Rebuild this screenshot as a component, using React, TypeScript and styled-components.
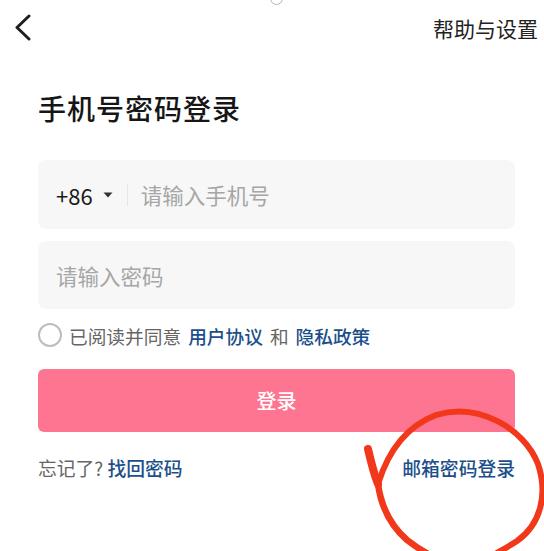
import React, { useState } from "react";
import styled, { createGlobalStyle } from "styled-components";

const GlobalStyle = createGlobalStyle`
  * { box-sizing: border-box; }
  body {
    margin: 0;
    background: #ffffff;
    font-family: "Noto Sans CJK SC", "Noto Sans", sans-serif;
  }
`;

const FONT = `"Noto Sans CJK SC", "Noto Sans", sans-serif`;

export default function App() {
  const [agreed, setAgreed] = useState(false);

  return (
    <StyledPage>
      <GlobalStyle />
      <StyledNotch />
      <StyledHeader>
        <StyledBack aria-label="back">
          <svg width="20" height="28" viewBox="0 0 20 28">
            <path d="M15 2 L3 13.5 L15 25" fill="none" stroke="#1f1f1f" strokeWidth="3" strokeLinecap="round" strokeLinejoin="round" />
          </svg>
        </StyledBack>
        <StyledHelp>帮助与设置</StyledHelp>
      </StyledHeader>

      <StyledTitle>手机号密码登录</StyledTitle>

      <StyledForm>
        <StyledInputBox $height={69}>
          <StyledCode>
            +86
            <svg width="10" height="6" viewBox="0 0 10 6">
              <path d="M0.5 0.5 L9.5 0.5 L5 5.5 Z" fill="#333" />
            </svg>
          </StyledCode>
          <StyledDivider />
          <StyledInput placeholder="请输入手机号" />
        </StyledInputBox>

        <StyledInputBox $height={68}>
          <StyledInput type="password" placeholder="请输入密码" />
        </StyledInputBox>

        <StyledAgreeRow>
          <StyledCheck $checked={agreed} onClick={() => setAgreed(!agreed)} />
          <span>已阅读并同意</span>
          <StyledLink>用户协议</StyledLink>
          <span>和</span>
          <StyledLink>隐私政策</StyledLink>
        </StyledAgreeRow>

        <StyledSubmit>登录</StyledSubmit>

        <StyledBottomRow>
          <StyledForgot>
            忘记了? <StyledLink>找回密码</StyledLink>
          </StyledForgot>
          <StyledLink>邮箱密码登录</StyledLink>
        </StyledBottomRow>
      </StyledForm>

      {/* hand-drawn red circle around the email login link */}
      <StyledScribble width="544" height="551" viewBox="0 0 544 551">
        <path
          d="M368 449 C371 462 374 474 378 484"
          fill="none"
          stroke="#f2381a"
          strokeWidth="8"
          strokeLinecap="round"
        />
        <path
          d="M378 484 C386 458 402 428 436 415 C478 402 524 428 538 464 C548 494 541 524 517 541 C508 547 500 551 492 556"
          fill="none"
          stroke="#f2381a"
          strokeWidth="6"
          strokeLinecap="round"
          strokeLinejoin="round"
        />
        <path
          d="M378 484 C381 506 391 526 407 540 C416 547 424 552 432 556"
          fill="none"
          stroke="#f2381a"
          strokeWidth="6.5"
          strokeLinecap="round"
        />
      </StyledScribble>
    </StyledPage>
  );
}

const StyledPage = styled.div`
  position: relative;
  width: 544px;
  height: 551px;
  overflow: hidden;
  background: #ffffff;
  font-family: ${FONT};
`;

const StyledNotch = styled.div`
  position: absolute;
  left: 270px;
  top: -8px;
  width: 13px;
  height: 13px;
  border: 1px solid #b5b5b5;
  border-radius: 50%;
`;

const StyledHeader = styled.div`
  height: 56px;
  display: flex;
  align-items: center;
  justify-content: space-between;
  padding: 0 6px 0 14px;
`;

const StyledBack = styled.button`
  border: none;
  background: none;
  padding: 0;
  display: flex;
  align-items: center;
  cursor: pointer;
`;

const StyledHelp = styled.span`
  font-size: 21px;
  line-height: 28px;
  color: #222;
`;

const StyledTitle = styled.h1`
  margin: 32px 0 0 38px;
  font-size: 28px;
  line-height: 40px;
  font-weight: 500;
  color: #161616;
  letter-spacing: 1px;
`;

const StyledForm = styled.div`
  padding: 0 29px 0 38px;
  margin-top: 32px;
  display: flex;
  flex-direction: column;
`;

const StyledInputBox = styled.div<{ $height: number }>`
  height: ${(p) => p.$height}px;
  background: #f7f7f7;
  border-radius: 8px;
  display: flex;
  align-items: center;
  padding: 0 18px;
  & + & {
    margin-top: 12px;
  }
`;

const StyledCode = styled.div`
  display: flex;
  align-items: center;
  gap: 10px;
  font-size: 22px;
  color: #1a1a1a;
`;

const StyledDivider = styled.div`
  width: 1px;
  height: 22px;
  background: #e6e6e6;
  margin: 0 13px 0 14px;
`;

const StyledInput = styled.input`
  flex: 1;
  min-width: 0;
  border: none;
  outline: none;
  background: transparent;
  font-family: ${FONT};
  font-size: 21.5px;
  color: #222;
  padding: 0;
  &::placeholder {
    color: #a6a6a6;
  }
`;

const StyledAgreeRow = styled.div`
  margin-top: 14px;
  height: 24px;
  display: flex;
  align-items: center;
  gap: 7px;
  font-size: 18.7px;
  color: #666;
`;

const StyledCheck = styled.div<{ $checked: boolean }>`
  width: 24px;
  height: 24px;
  border-radius: 50%;
  border: 2px solid ${(p) => (p.$checked ? "#fd7590" : "#bdbdbd")};
  background: ${(p) => (p.$checked ? "#fd7590" : "transparent")};
  flex-shrink: 0;
  cursor: pointer;
`;

const StyledLink = styled.span`
  color: #1c4f8a;
  font-weight: 500;
  cursor: pointer;
`;

const StyledSubmit = styled.button`
  margin-top: 22px;
  height: 63px;
  border: none;
  border-radius: 6px;
  background: #fd7590;
  color: #ffffff;
  font-family: ${FONT};
  font-size: 20px;
  font-weight: 500;
  cursor: pointer;
`;

const StyledBottomRow = styled.div`
  margin-top: 23px;
  display: flex;
  justify-content: space-between;
  align-items: center;
  font-size: 18.8px;
  line-height: 26px;
`;

const StyledForgot = styled.span`
  color: #666;
`;

const StyledScribble = styled.svg`
  position: absolute;
  left: 0;
  top: 0;
  pointer-events: none;
`;
